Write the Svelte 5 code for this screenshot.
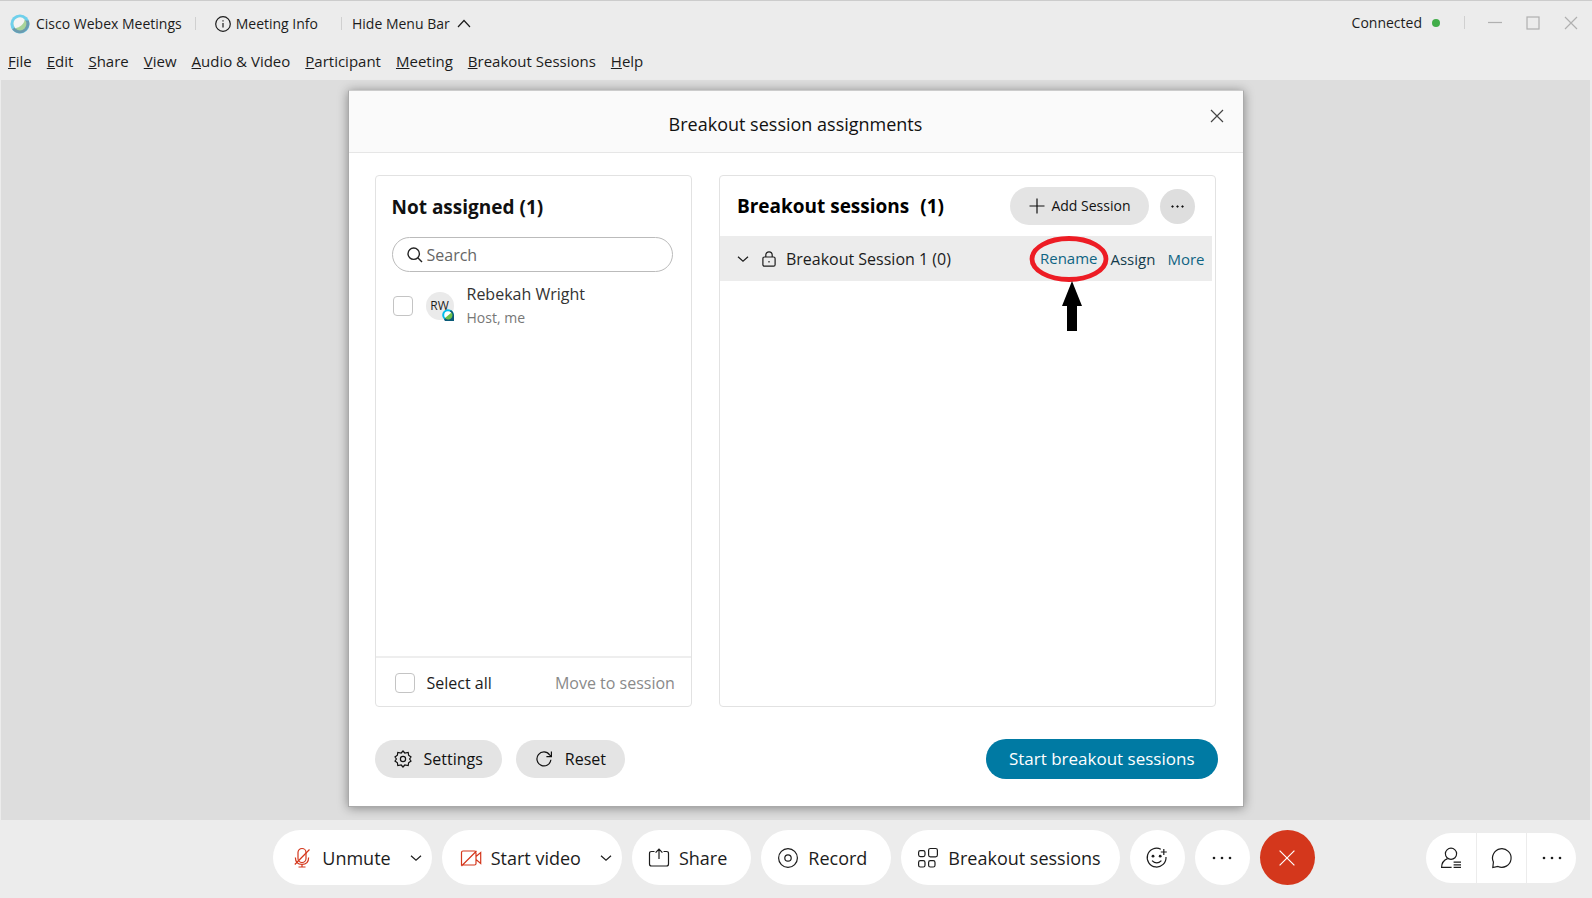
<script lang="ts">
  const menus = [
    'File',
    'Edit',
    'Share',
    'View',
    'Audio & Video',
    'Participant',
    'Meeting',
    'Breakout Sessions',
    'Help'
  ];

  let search = $state('');
  let picked = $state(false);
  let all = $state(false);
</script>

{#snippet chevron(cls: string)}
  <svg class={cls} viewBox="0 0 12 8" aria-hidden="true"><path d="M1 1.8 L6 6.2 L11 1.8" /></svg>
{/snippet}

{#snippet dots()}
  <svg class="icon solid" viewBox="0 0 24 24" aria-hidden="true">
    <circle cx="4" cy="12" r="1.3" /><circle cx="12" cy="12" r="1.3" /><circle cx="20" cy="12" r="1.3" />
  </svg>
{/snippet}

<div class="window">
  <header>
    <div class="titlebar">
      <div class="brand">
        <svg viewBox="0 0 20 20" aria-hidden="true">
          <circle cx="10" cy="10" r="9.6" fill="#6fd0ec" />
          <path d="M18.8 6.5 A9.6 9.6 0 0 1 2.2 15.6 L5.5 12.8 L15 6.5 Z" fill="#6b9bb0" />
          <circle cx="10" cy="10" r="6.4" fill="#a8d49a" />
          <path d="M3.8 11.6 A6.4 6.4 0 0 1 14.6 5.5 C14.2 10 10 13.6 5.2 14.2 Z" fill="#f4f4f4" />
        </svg>
        <span>Cisco Webex Meetings</span>
      </div>
      <button class="plain info">
        <svg viewBox="0 0 16 16" aria-hidden="true">
          <circle cx="8" cy="8" r="7.3" /><path d="M8 7 V11.6 M8 4.3 V5.6" />
        </svg>
        Meeting Info
      </button>
      <button class="plain hide">
        Hide Menu Bar
        <svg viewBox="0 0 14 9" aria-hidden="true"><path d="M1 8 L7 1.5 L13 8" /></svg>
      </button>
      <div class="status">Connected <i></i></div>
      <div class="controls">
        <button class="plain" aria-label="Minimize"><svg viewBox="0 0 14 14"><path d="M0 6.5 H14" /></svg></button>
        <button class="plain" aria-label="Maximize"><svg viewBox="0 0 14 14"><rect x="1" y="1" width="12" height="12" /></svg></button>
        <button class="plain" aria-label="Close window"><svg viewBox="0 0 14 14"><path d="M1 1 L13 13 M13 1 L1 13" /></svg></button>
      </div>
    </div>
    <nav>
      {#each menus as m}
        <button class="plain"><u>{m[0]}</u>{m.slice(1)}</button>
      {/each}
    </nav>
  </header>

  <main>
    <div class="dialog" role="dialog" aria-labelledby="dialog-title">
      <div class="head">
        <h1 id="dialog-title">Breakout session assignments</h1>
        <button class="plain close" aria-label="Close">
          <svg viewBox="0 0 14 14"><path d="M1 1 L13 13 M13 1 L1 13" /></svg>
        </button>
      </div>

      <div class="panels">
        <section class="panel people">
          <h2>Not assigned (1)</h2>
          <label class="search">
            <svg viewBox="0 0 16 16" aria-hidden="true">
              <circle cx="6.7" cy="6.7" r="5.7" /><path d="M10.8 10.8 L15 15" />
            </svg>
            <input type="text" placeholder="Search" aria-label="Search" bind:value={search} />
          </label>
          <label class="person">
            <input type="checkbox" bind:checked={picked} />
            <span class="avatar">
              RW
              <svg viewBox="0 0 12 12" aria-hidden="true">
                <circle cx="6" cy="6" r="5.8" fill="#00bceb" />
                <path d="M9 1 Q12 3 12 6 V12 H3 L2 10.6 Z" fill="#0a5a78" />
                <circle cx="6" cy="6" r="3.8" fill="#fff" />
                <path d="M9.5 3.5 A4 4 0 0 1 3 9 Z" fill="#6cc04a" />
              </svg>
            </span>
            <span class="who">
              <span>Rebekah Wright</span>
              <small>Host, me</small>
            </span>
          </label>
          <div class="bulk">
            <label><input type="checkbox" bind:checked={all} />Select all</label>
            <button class="plain move">Move to session</button>
          </div>
        </section>

        <section class="panel">
          <div class="sessions-head">
            <h2>Breakout sessions <span>(1)</span></h2>
            <button class="pill add">
              <svg viewBox="0 0 16 16" aria-hidden="true"><path d="M8 0.5 V15.5 M0.5 8 H15.5" /></svg>
              Add Session
            </button>
            <button class="pill more" aria-label="More options">{@render dots()}</button>
          </div>
          <div class="session">
            {@render chevron('chev')}
            <svg class="lock" viewBox="0 0 14 16" aria-hidden="true">
              <rect x="0.9" y="6" width="12.2" height="9.2" rx="1.5" />
              <path d="M3.8 6 V4 A3.2 3.2 0 0 1 10.2 4 V6 M7 10 V11.4" />
            </svg>
            <span class="name">Breakout Session 1 (0)</span>
            <span class="marked">
              <a href="#rename">Rename</a>
              <svg class="mark" viewBox="0 0 80 96" aria-hidden="true">
                <ellipse cx="40" cy="23" rx="37" ry="20.5" fill="none" stroke="#ed1c24" stroke-width="4.8" />
                <path d="M43 45 L53 70 H48 V95 H38 V70 H33 Z" fill="#000" />
              </svg>
            </span>
            <a class="dark" href="#assign">Assign</a>
            <a href="#more">More</a>
          </div>
        </section>
      </div>

      <div class="actions">
        <button class="pill">
          <svg viewBox="0 0 18 18" aria-hidden="true">
            <path d="M9 1 L10.8 3 L14.2 2.4 L14.6 5.2 L17 7 L15.6 9 L17 11 L14.6 12.8 L14.2 15.6 L10.8 15 L9 17 L7.2 15 L3.8 15.6 L3.4 12.8 L1 11 L2.4 9 L1 7 L3.4 5.2 L3.8 2.4 L7.2 3 Z" />
            <circle cx="9" cy="9" r="2.6" />
          </svg>
          Settings
        </button>
        <button class="pill">
          <svg viewBox="0 0 18 18" aria-hidden="true">
            <path d="M15.9 9.8 A7 7 0 1 1 14.6 4.8 L16.2 6.4 M16.4 1.6 V6.6 H11.4" />
          </svg>
          Reset
        </button>
        <button class="pill start">Start breakout sessions</button>
      </div>
    </div>
  </main>

  <footer>
    <div class="tools">
      <button class="tool split">
        <svg class="icon red" viewBox="0 0 24 24" aria-hidden="true">
          <rect x="8" y="2.5" width="8" height="14" rx="4" />
          <path d="M5.4 11.5 C5.4 15.5 7.5 18.4 12 18.4 C16.5 18.4 18.6 15.5 18.6 11.5 M12 18.4 V21 M8.5 21 H15.5 M19.5 3.5 L4.8 18.5" />
        </svg>
        Unmute {@render chevron('chev')}
      </button>
      <button class="tool split">
        <svg class="icon red" viewBox="0 0 24 24" aria-hidden="true">
          <path d="M2.5 19.5 V6.5 Q2.5 5 4 5 H15.5 Q17 5 17 6.5 V17.5 Q17 19 15.5 19 H4 M2.5 20 L17.5 5 M17 10.5 L21.7 6.6 V17.4 L17 13.5" />
        </svg>
        Start video {@render chevron('chev')}
      </button>
      <button class="tool">
        <svg class="icon" viewBox="0 0 24 24" aria-hidden="true">
          <path d="M7.5 5.5 H4.5 Q2.5 5.5 2.5 7.5 V18 Q2.5 20 4.5 20 H19.5 Q21.5 20 21.5 18 V7.5 Q21.5 5.5 19.5 5.5 H16.5 M12 13 V3.5 M8.6 6.6 L12 3 L15.4 6.6" />
        </svg>
        Share
      </button>
      <button class="tool">
        <svg class="icon" viewBox="0 0 24 24" aria-hidden="true">
          <circle cx="12" cy="12" r="9.4" /><circle cx="12" cy="12" r="3.2" />
        </svg>
        Record
      </button>
      <button class="tool breakout">
        <svg class="icon" viewBox="0 0 24 24" aria-hidden="true">
          <rect x="2.6" y="4.6" width="6.4" height="6" rx="1.8" />
          <rect x="12.6" y="2.5" width="8.8" height="8.4" rx="1.8" />
          <rect x="2.6" y="14.6" width="6.4" height="6.4" rx="1.8" />
          <rect x="12.6" y="14.6" width="6.4" height="6.4" rx="1.8" />
        </svg>
        Breakout sessions
      </button>
      <button class="tool round" aria-label="Reactions">
        <svg class="icon" viewBox="0 0 24 24" aria-hidden="true">
          <path d="M15.8 3.2 A9.4 9.4 0 1 0 21 11 M18.8 3 V9 M15.8 6 H21.8 M7 14.6 Q11.8 19.2 16.4 14.6" />
          <circle class="eye" cx="8" cy="10.2" r="1.4" /><circle class="eye" cx="15.2" cy="10.2" r="1.4" />
        </svg>
      </button>
      <button class="tool round" aria-label="More">{@render dots()}</button>
      <button class="tool round end" aria-label="End meeting">
        <svg class="icon" viewBox="0 0 24 24" aria-hidden="true"><path d="M4.6 4.6 L19.4 19.4 M19.4 4.6 L4.6 19.4" /></svg>
      </button>
    </div>
    <div class="side">
      <button class="tool" aria-label="Participants">
        <svg class="icon" viewBox="0 0 24 24" aria-hidden="true">
          <circle cx="12" cy="7.8" r="5.6" />
          <path d="M8.6 12.6 C5 14 2.6 16.5 2.6 21.4 H12.6 M14.6 16.2 H22 M14.6 18.8 H22 M14.6 21.4 H22" />
        </svg>
      </button>
      <button class="tool" aria-label="Chat">
        <svg class="icon" viewBox="0 0 24 24" aria-hidden="true">
          <path d="M3.4 16 A9.3 9.3 0 1 1 8 20.5 L2.8 21.6 Z" />
        </svg>
      </button>
      <button class="tool" aria-label="More panels">{@render dots()}</button>
    </div>
  </footer>
</div>

<style>
  :global(body) {
    margin: 0;
  }

  .window {
    display: flex;
    flex-direction: column;
    min-height: 100vh;
    box-sizing: border-box;
    border-top: 1px solid #ccc;
    background: #ececec;
    color: #1c1c1c;
    font-family: 'Open Sans', 'Noto Sans', sans-serif;
    font-size: 14px;
    line-height: 20px;
  }

  button {
    font: inherit;
    color: inherit;
    border: 0;
    cursor: pointer;
    white-space: nowrap;
  }

  svg {
    display: block;
    flex: none;
    fill: none;
    stroke: currentColor;
    stroke-width: 1.2;
  }

  .plain {
    padding: 0;
    background: none;
  }

  /* title bar and menu */
  .titlebar {
    display: flex;
    align-items: center;
    height: 45px;
    padding: 0 14px 0 10px;
  }

  .brand,
  .info,
  .hide,
  .status {
    display: flex;
    align-items: center;
  }

  .brand {
    gap: 6px;
  }

  .brand svg {
    width: 20px;
    height: 20px;
    stroke: none;
  }

  .info {
    gap: 5px;
    margin-left: 13px;
    padding-left: 20px;
  }

  .info svg {
    width: 16px;
    height: 16px;
  }

  .hide {
    gap: 7px;
    margin-left: 23px;
    padding-left: 11px;
  }

  .hide svg {
    width: 14px;
    height: 9px;
  }

  .info,
  .hide {
    background: linear-gradient(#d0d0d0, #d0d0d0) 0 50% / 1px 13px no-repeat;
  }

  .status {
    gap: 10px;
    margin-left: auto;
  }

  .status i {
    width: 8px;
    height: 8px;
    border-radius: 50%;
    background: #41ad49;
  }

  .controls {
    display: flex;
    gap: 24px;
    margin-left: 24px;
    padding-left: 24px;
    color: #b0b0b0;
    background: linear-gradient(#d0d0d0, #d0d0d0) 0 50% / 1px 13px no-repeat;
  }

  .status,
  .controls {
    margin-bottom: 2px;
  }

  .controls svg {
    width: 14px;
    height: 14px;
  }

  nav {
    display: flex;
    gap: 15px;
    height: 34px;
    padding: 0 8px;
    font-size: 15px;
  }

  nav button {
    height: 30px;
  }

  /* dialog */
  main {
    flex: 1;
    display: flex;
    justify-content: center;
    margin: 0 2px 0 1px;
    padding: 10px 20px 13px;
    background: #ddd;
  }

  .dialog {
    display: flex;
    flex-direction: column;
    width: 100%;
    max-width: 896px;
    box-sizing: border-box;
    border: 1px solid #aaa;
    border-top-color: #ccc;
    background: #fff;
    box-shadow: 0 1px 10px rgba(0, 0, 0, 0.4);
  }

  .head {
    display: grid;
    grid-template-columns: 1fr auto 1fr;
    height: 61px;
    padding: 0 18px;
    border-bottom: 1px solid #e6e6e6;
    background: #fafafa;
  }

  h1 {
    grid-column: 2;
    margin: 0;
    font-size: 18px;
    font-weight: 400;
    line-height: 66px;
    color: #111;
  }

  .close {
    justify-self: end;
    align-self: start;
    padding: 18px 1px;
    color: #444;
  }

  .close svg {
    width: 14px;
    height: 14px;
  }

  .panels {
    flex: 1;
    display: grid;
    grid-template-columns: 317fr 497fr;
    gap: 27px;
    padding: 22px 26px 0;
  }

  .panel {
    display: flex;
    flex-direction: column;
    border: 1px solid #e2e2e2;
    border-radius: 4px;
  }

  h2 {
    margin: 0;
    font-size: 19px;
    font-weight: 700;
    line-height: 24px;
    color: #111;
  }

  .people h2 {
    padding: 19px 16px 18px;
  }

  .search {
    display: flex;
    align-items: center;
    gap: 4px;
    height: 33px;
    margin: 0 18px 0 16px;
    padding: 0 14px;
    border: 1px solid #bbb;
    border-radius: 18px;
  }

  .search svg {
    width: 16px;
    height: 16px;
    stroke: #222;
    stroke-width: 1.4;
  }

  .search input {
    flex: 1;
    min-width: 0;
    padding: 0;
    border: 0;
    outline: 0;
    background: none;
    font: inherit;
    font-size: 16px;
  }

  .search input::placeholder {
    color: #666;
    opacity: 1;
  }

  input[type='checkbox'] {
    appearance: none;
    flex: none;
    width: 20px;
    height: 20px;
    margin: 0;
    border: 1px solid #c4c4c4;
    border-radius: 4px;
    background: #fff;
  }

  input[type='checkbox']:checked {
    background: #007aa3;
  }

  .person {
    display: flex;
    align-items: center;
    padding: 10px 17px;
  }

  .avatar {
    position: relative;
    width: 28px;
    height: 28px;
    margin: 0 13px;
    border-radius: 50%;
    background: #eaeaea;
    font-size: 12px;
    line-height: 28px;
    text-align: center;
  }

  .avatar svg {
    position: absolute;
    right: 0;
    bottom: -1px;
    width: 12px;
    height: 12px;
    stroke: none;
  }

  .who {
    font-size: 16px;
    line-height: 24px;
    color: #333;
  }

  .who small {
    display: block;
    font-size: 14px;
    color: #777;
  }

  .bulk {
    display: flex;
    align-items: center;
    justify-content: space-between;
    height: 50px;
    margin-top: auto;
    padding: 2px 16px 0 19px;
    border-top: 2px solid #eee;
    box-sizing: border-box;
    font-size: 16px;
  }

  .bulk label {
    display: flex;
    align-items: center;
    gap: 12px;
  }

  .move {
    color: #8a8a8a;
  }

  .sessions-head {
    display: flex;
    align-items: center;
    height: 60px;
    padding: 0 20px 0 17px;
    box-sizing: border-box;
  }

  .sessions-head h2 {
    flex: 1;
    color: #000;
  }

  .sessions-head h2 span {
    margin-left: 6px;
  }

  .pill {
    display: flex;
    align-items: center;
    justify-content: center;
    height: 38px;
    padding: 0 19px;
    border-radius: 20px;
    background: #e4e4e4;
    color: #111;
    font-size: 16px;
  }

  .pill svg {
    width: 18px;
    height: 18px;
  }

  .add {
    gap: 6px;
    margin-right: 11px;
    font-size: 14px;
  }

  .add svg {
    width: 16px;
    height: 16px;
  }

  .more {
    width: 35px;
    height: 35px;
    padding: 0;
    background: #dedede;
  }

  .more .icon {
    width: 15px;
    height: 15px;
    stroke: currentColor;
  }

  .session {
    display: flex;
    align-items: center;
    height: 45px;
    margin-right: 3px;
    padding: 0 8px 0 17px;
    background: #ececec;
  }

  .chev {
    width: 12px;
    height: 8px;
  }

  .lock {
    width: 14px;
    height: 16px;
    margin: 0 10px 0 13px;
  }

  .name {
    flex: 1;
    font-size: 16px;
  }

  .session a {
    color: #0f6483;
    font-size: 15px;
    text-decoration: none;
  }

  .session .dark {
    margin: 0 12px 0 13px;
    color: #143c4c;
  }

  .marked {
    position: relative;
  }

  .mark {
    position: absolute;
    top: -12px;
    left: -11px;
    width: 80px;
    height: 96px;
    stroke: none;
    pointer-events: none;
  }

  .actions {
    display: flex;
    align-items: center;
    gap: 14px;
    height: 40px;
    padding: 32px 25px 27px 26px;
  }

  .actions .pill {
    gap: 12px;
  }

  .actions .start {
    height: 40px;
    margin-left: auto;
    padding: 0 23px;
    background: #007aa3;
    color: #fff;
    font-size: 17px;
  }

  /* meeting controls */
  footer {
    display: grid;
    grid-template-columns: 1fr auto 1fr;
    align-items: center;
    height: 78px;
    padding: 0 16px 0 12px;
  }

  .tools {
    grid-column: 2;
    display: flex;
    gap: 10px;
    margin-bottom: 3px;
  }

  .tool {
    display: flex;
    align-items: center;
    gap: 8px;
    height: 55px;
    padding: 0 24px 0 15px;
    border-radius: 28px;
    background: #fff;
    font-size: 18px;
  }

  .icon {
    width: 24px;
    height: 24px;
  }

  .solid,
  .eye {
    fill: currentColor;
    stroke: none;
  }

  .red {
    color: #d4371c;
  }

  .split {
    padding: 0 10px 0 17px;
  }

  .tool .chev {
    margin-left: 11px;
  }

  .breakout {
    padding-right: 19px;
  }

  .round {
    justify-content: center;
    width: 55px;
    padding: 0;
  }

  .end {
    background: #d4371c;
    color: #fff;
  }

  .side {
    justify-self: end;
    display: flex;
    margin-bottom: 3px;
    border-radius: 25px;
    overflow: hidden;
  }

  .side .tool {
    justify-content: center;
    width: 50px;
    height: 50px;
    padding: 0;
    border-radius: 0;
  }

  .side .tool + .tool {
    border-left: 1px solid #ececec;
  }
</style>
